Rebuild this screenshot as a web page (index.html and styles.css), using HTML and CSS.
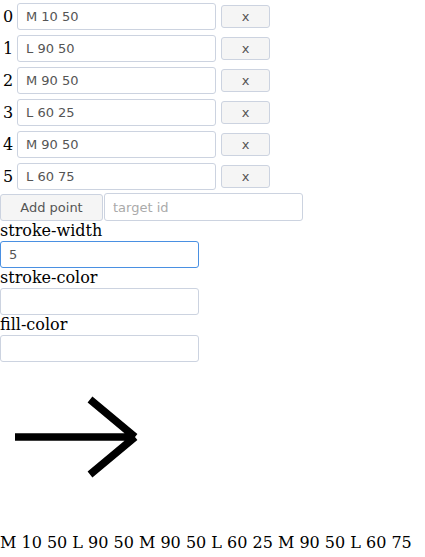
FILE: index.html
```html
<!DOCTYPE html>
<html>
<head>
<meta charset="utf-8">
<link rel="stylesheet" href="styles.css">
</head>
<body>
<div class="points">
  <div class="row"><span class="idx">0</span><input class="field" value="M 10 50"><button class="del">x</button></div>
  <div class="row"><span class="idx">1</span><input class="field" value="L 90 50"><button class="del">x</button></div>
  <div class="row"><span class="idx">2</span><input class="field" value="M 90 50"><button class="del">x</button></div>
  <div class="row"><span class="idx">3</span><input class="field" value="L 60 25"><button class="del">x</button></div>
  <div class="row"><span class="idx">4</span><input class="field" value="M 90 50"><button class="del">x</button></div>
  <div class="row"><span class="idx">5</span><input class="field" value="L 60 75"><button class="del">x</button></div>
</div>
<div class="add-row"><button class="add">Add point</button><input class="field target" placeholder="target id"></div>
<div class="prop"><label class="lbl">stroke-width</label><input class="field focus" value="5"></div>
<div class="prop"><label class="lbl">stroke-color</label><input class="field"></div>
<div class="prop"><label class="lbl">fill-color</label><input class="field"></div>
<svg class="canvas" width="150" height="150" viewBox="0 0 100 100">
  <path d="M 10 50 L 90 50 M 90 50 L 60 25 M 90 50 L 60 75" stroke="#000" stroke-width="5" fill="none"/>
</svg>
<div class="out">M 10 50 L 90 50 M 90 50 L 60 25 M 90 50 L 60 75</div>
</body>
</html>
```
FILE: styles.css
```css
body {
  margin: 0;
  font-family: "DejaVu Serif", serif;
  font-size: 16px;
  color: #000;
  background: #fff;
}
.points {
  display: flex;
  flex-direction: column;
  gap: 5px;
  padding-top: 3px;
}
.row {
  display: flex;
  align-items: center;
  height: 27px;
}
.idx {
  width: 14px;
  padding-left: 3px;
  line-height: 19px;
}
.field {
  box-sizing: border-box;
  width: 199px;
  height: 27px;
  margin: 0;
  padding: 0 8px;
  border: 1px solid #ccd3e0;
  border-radius: 3px;
  font-family: "DejaVu Sans", sans-serif;
  font-size: 13px;
  color: #555;
  background: #fff;
  outline: none;
}
.field::placeholder {
  color: #aaa;
}
.del {
  box-sizing: border-box;
  width: 49px;
  height: 23px;
  margin: 0 0 0 5px;
  padding: 0;
  border: 1px solid #ccd3e0;
  border-radius: 3px;
  background: #f5f5f5;
  font-family: "DejaVu Sans", sans-serif;
  font-size: 13px;
  color: #555;
}
.add-row {
  display: flex;
  align-items: center;
  gap: 1px;
  margin-top: 3px;
  height: 28px;
}
.add {
  box-sizing: border-box;
  width: 103px;
  height: 27px;
  margin: 0;
  padding: 0;
  border: 1px solid #ccd3e0;
  border-radius: 3px;
  background: #f5f5f5;
  font-family: "DejaVu Sans", sans-serif;
  font-size: 13px;
  color: #555;
}
.target {
  width: 199px;
  height: 28px;
}
.prop {
  display: flex;
  flex-direction: column;
  align-items: flex-start;
}
.lbl {
  display: block;
  height: 20px;
  line-height: 20px;
}
.focus {
  border-color: #4a90e2;
}
.canvas {
  display: block;
}
.out {
  margin-top: 21px;
  line-height: 19px;
}
```
